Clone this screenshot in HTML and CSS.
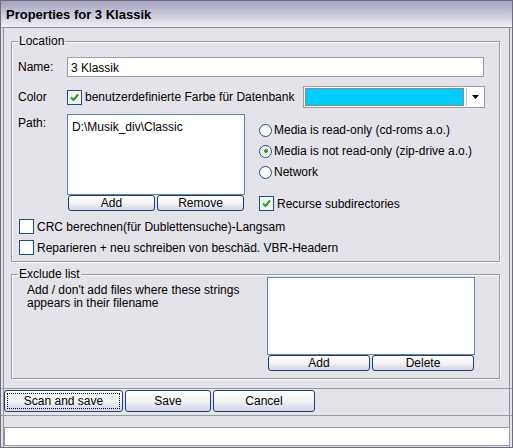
FILE: index.html
```html
<html>
<head>
    <title>Properties for 3 Klassik</title>
    <meta charset="UTF-8">
    <link rel="stylesheet" href="styles.css">
</head>
<body>
<div class="window">
    <div class="titlebar">Properties for 3 Klassik</div>
    <div class="client">
        <fieldset class="group location">
            <legend>Location</legend>
            <div class="row name-row">
                <span class="lbl">Name:</span>
                <div class="edit">3 Klassik</div>
            </div>
            <div class="row color-row">
                <span class="lbl">Color</span>
                <label class="check"><span class="box on"><svg width="11" height="11" viewBox="0 0 11 11"><path d="M2 5.5 L4.5 8 L9 2.5" fill="none" stroke="#21a121" stroke-width="2"/></svg></span>benutzerdefinierte Farbe für Datenbank</label>
                <div class="combo"><div class="swatch"></div><div class="drop"><svg width="7" height="4" viewBox="0 0 7 4"><path d="M0 0 H7 L3.5 4 Z" fill="#000"/></svg></div></div>
            </div>
            <div class="path-area">
                <span class="lbl path-lbl">Path:</span>
                <div class="path-col">
                    <div class="listbox path-list">D:\Musik_div\Classic</div>
                    <div class="btnrow">
                        <button class="btn">Add</button>
                        <button class="btn">Remove</button>
                    </div>
                </div>
                <div class="media">
                    <label class="radio"><span class="dot"></span>Media is read-only (cd-roms a.o.)</label>
                    <label class="radio"><span class="dot on"></span>Media is not read-only (zip-drive a.o.)</label>
                    <label class="radio"><span class="dot"></span>Network</label>
                    <label class="check recurse"><span class="box on"><svg width="11" height="11" viewBox="0 0 11 11"><path d="M2 5.5 L4.5 8 L9 2.5" fill="none" stroke="#21a121" stroke-width="2"/></svg></span>Recurse subdirectories</label>
                </div>
            </div>
            <label class="check opt"><span class="box"></span>CRC berechnen(für Dublettensuche)-Langsam</label>
            <label class="check opt"><span class="box"></span>Reparieren + neu schreiben von beschäd. VBR-Headern</label>
        </fieldset>
        <fieldset class="group exclude">
            <legend>Exclude list</legend>
            <div class="hint">Add / don't add files where these strings<br>appears in their filename</div>
            <div class="ex-col">
                <div class="listbox ex-list"></div>
                <div class="btnrow">
                    <button class="btn">Add</button>
                    <button class="btn">Delete</button>
                </div>
            </div>
        </fieldset>
    </div>
    <div class="actions">
        <button class="btn big default">Scan and save</button>
        <button class="btn big save">Save</button>
        <button class="btn big cancel">Cancel</button>
    </div>
    <div class="status"></div>
</div>
</body>
</html>
```

FILE: styles.css
```css
body{
    margin:0;
    padding:0;
    background:#e4e3ea;
    font-family:'Liberation Sans', Arial, sans-serif;
    font-size:12px;
    color:#000;
}
.window{
    width:513px;
    height:448px;
    box-sizing:border-box;
    border:1px solid #6e6e7e;
    box-shadow:inset 2px 0 0 #e4e3ea, inset 3px 0 0 #8e8e9a, inset -2px 0 0 #e4e3ea, inset -3px 0 0 #8e8e9a;
    display:flex;
    flex-direction:column;
}
.titlebar{
    height:27px;
    box-sizing:border-box;
    padding:6px 0 0 5px;
    font-size:13px;
    font-weight:bold;
    background:linear-gradient(#a3a2bd, #c9c8da 50%, #f1f1f6);
    border-bottom:1px solid #8e8e9a;
}
.client{
    padding:6px 0 0 10px;
    display:flex;
    flex-direction:column;
    gap:5px;
}
.group{
    margin:0;
    width:489px;
    box-sizing:border-box;
    border:1px solid #9b9ba4;
    box-shadow:inset 1px 1px 0 #fff, 1px 1px 0 #fff;
    padding:0 8px 0 6px;
}
.group legend{
    padding:0 1px;
    margin-left:0;
}
.location{
    height:228px;
}
.row{
    display:flex;
    align-items:center;
}
.lbl{
    width:49px;
    flex:none;
}
.name-row{
    margin-top:9px;
}
.edit{
    flex:1;
    margin-right:7px;
    height:20px;
    box-sizing:border-box;
    border:1px solid #9c9caa;
    background:#fff;
    padding:3px 0 0 3px;
}
.color-row{
    margin-top:9px;
}
.check, .radio{
    display:flex;
    align-items:center;
    white-space:nowrap;
}
.box{
    width:13px;
    height:13px;
    border:1px solid #1c5180;
    background:#fff;
    margin-right:3px;
    display:flex;
    align-items:center;
    justify-content:center;
    flex:none;
}
.box.on{
    background:#f4f4f4;
}
.combo{
    margin-left:auto;
    margin-right:6px;
    width:182px;
    height:22px;
    box-sizing:border-box;
    border:1px solid #9c9caa;
    background:#fff;
    display:flex;
    padding:1px;
}
.swatch{
    flex:1;
    background:#00ccff;
    border:1px solid #8a8a8a;
}
.drop{
    width:16px;
    margin-left:2px;
    display:flex;
    align-items:center;
    justify-content:center;
    border-left:1px solid #c0c0c8;
}
.path-area{
    display:flex;
    margin-top:6px;
}
.path-lbl{
    margin-top:2px;
}
.path-col{
    width:178px;
    display:flex;
    flex-direction:column;
}
.listbox{
    background:#fff;
    border:1px solid #5e86b0;
    box-sizing:border-box;
}
.path-list{
    height:81px;
    padding:5px 0 0 4px;
}
.btnrow{
    display:flex;
    gap:2px;
    padding:0 1px;
}
.btnrow .btn{
    flex:1;
    height:16px;
}
.btn{
    font-family:inherit;
    font-size:12px;
    color:#000;
    border:1px solid #1d3f6e;
    border-radius:3px;
    background:linear-gradient(#ffffff, #f3f3f8 50%, #d4d4e4);
    padding:0;
}
.media{
    margin-left:14px;
    padding-top:9px;
    display:flex;
    flex-direction:column;
    gap:7px;
}
.dot{
    width:13px;
    height:13px;
    border:1px solid #1c5180;
    border-radius:50%;
    background:#fff;
    margin-right:2px;
    box-sizing:border-box;
    display:flex;
    align-items:center;
    justify-content:center;
}
.dot.on::after{
    content:"";
    width:4px;
    height:4px;
    border-radius:50%;
    background:#21a121;
}
.recurse{
    margin-top:10px;
}
.opt{
    margin-top:8px;
    margin-left:1px;
}
.opt + .opt{
    margin-top:6px;
}
.exclude{
    height:112px;
    display:flex;
    padding:0 8px 0 15px;
}
.exclude legend{
    margin-left:-9px;
}
.hint{
    width:240px;
    padding-top:3px;
    line-height:13px;
}
.ex-col{
    width:208px;
    display:flex;
    flex-direction:column;
    margin-top:-4px;
}
.ex-list{
    height:78px;
}
.actions{
    margin-top:9px;
    padding:1px 3px 3px;
    display:flex;
    gap:2px;
    border-top:1px solid #9a9aa4;
    border-bottom:1px solid #9a9aa4;
}
.big{
    height:22px;
}
.default{
    width:119px;
    outline:1px dotted #000;
    outline-offset:-4px;
}
.save{
    width:86px;
}
.cancel{
    width:102px;
}
.status{
    margin:11px 2px 0 3px;
    height:17px;
    background:#fff;
    border:1px solid #9a9aa4;
}
```
